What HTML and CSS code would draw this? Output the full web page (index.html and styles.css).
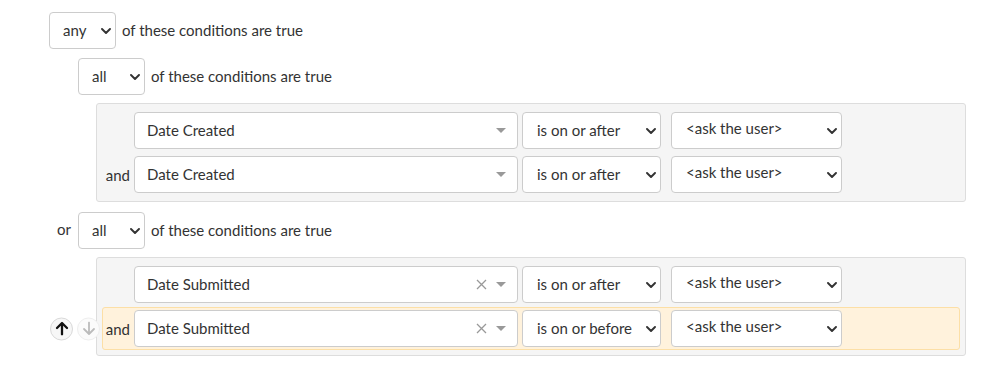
FILE: index.html
```html
<!DOCTYPE html>
<html lang="en">
<head>
  <meta charset="UTF-8">
  <title>Conditions</title>
  <link rel="stylesheet" href="styles.css">
</head>
<body>
  <div class="builder">
    <div class="group-head">
      <div class="pick pick-match"><span>any</span>
        <svg class="chev" width="10" height="6" viewBox="0 0 10 6"><path d="M1 1 L5 5 L9 1"/></svg>
      </div>
      <span class="head-text">of these conditions are true</span>
    </div>

    <div class="child">
      <div class="connector"></div>
      <div class="child-body">
        <div class="group-head">
          <div class="pick pick-match"><span>all</span>
            <svg class="chev" width="10" height="6" viewBox="0 0 10 6"><path d="M1 1 L5 5 L9 1"/></svg>
          </div>
          <span class="head-text">of these conditions are true</span>
        </div>
        <div class="panel">
          <div class="cond">
            <span class="cond-label"></span>
            <div class="pick pick-field"><span>Date Created</span>
              <span class="field-icons">
                <svg class="caret" width="10" height="5" viewBox="0 0 10 5"><path d="M0 0 H10 L5 5 Z"/></svg>
              </span>
            </div>
            <div class="pick pick-op"><span>is on or after</span>
              <svg class="chev" width="10" height="6" viewBox="0 0 10 6"><path d="M1 1 L5 5 L9 1"/></svg>
            </div>
            <div class="pick pick-value"><span>&lt;ask the user&gt;</span>
              <svg class="chev" width="10" height="6" viewBox="0 0 10 6"><path d="M1 1 L5 5 L9 1"/></svg>
            </div>
          </div>
          <div class="cond">
            <span class="cond-label">and</span>
            <div class="pick pick-field"><span>Date Created</span>
              <span class="field-icons">
                <svg class="caret" width="10" height="5" viewBox="0 0 10 5"><path d="M0 0 H10 L5 5 Z"/></svg>
              </span>
            </div>
            <div class="pick pick-op"><span>is on or after</span>
              <svg class="chev" width="10" height="6" viewBox="0 0 10 6"><path d="M1 1 L5 5 L9 1"/></svg>
            </div>
            <div class="pick pick-value"><span>&lt;ask the user&gt;</span>
              <svg class="chev" width="10" height="6" viewBox="0 0 10 6"><path d="M1 1 L5 5 L9 1"/></svg>
            </div>
          </div>
        </div>
      </div>
    </div>

    <div class="child">
      <div class="connector">or</div>
      <div class="child-body">
        <div class="group-head">
          <div class="pick pick-match"><span>all</span>
            <svg class="chev" width="10" height="6" viewBox="0 0 10 6"><path d="M1 1 L5 5 L9 1"/></svg>
          </div>
          <span class="head-text">of these conditions are true</span>
        </div>
        <div class="panel">
          <div class="cond">
            <span class="cond-label"></span>
            <div class="pick pick-field"><span>Date Submitted</span>
              <span class="field-icons">
                <svg class="clear" width="11" height="11" viewBox="0 0 11 11"><path d="M1 1 L10 10 M10 1 L1 10"/></svg>
                <svg class="caret" width="10" height="5" viewBox="0 0 10 5"><path d="M0 0 H10 L5 5 Z"/></svg>
              </span>
            </div>
            <div class="pick pick-op"><span>is on or after</span>
              <svg class="chev" width="10" height="6" viewBox="0 0 10 6"><path d="M1 1 L5 5 L9 1"/></svg>
            </div>
            <div class="pick pick-value"><span>&lt;ask the user&gt;</span>
              <svg class="chev" width="10" height="6" viewBox="0 0 10 6"><path d="M1 1 L5 5 L9 1"/></svg>
            </div>
          </div>
          <div class="cond cond-active">
            <div class="move">
              <span class="move-btn"><svg width="14" height="14" viewBox="0 0 14 14"><path d="M7 13 V2 M2 6.5 L7 1.5 L12 6.5"/></svg></span>
              <span class="move-btn move-off"><svg width="14" height="14" viewBox="0 0 14 14"><path d="M7 1 V12 M2 7.5 L7 12.5 L12 7.5"/></svg></span>
            </div>
            <span class="cond-label">and</span>
            <div class="pick pick-field"><span>Date Submitted</span>
              <span class="field-icons">
                <svg class="clear" width="11" height="11" viewBox="0 0 11 11"><path d="M1 1 L10 10 M10 1 L1 10"/></svg>
                <svg class="caret" width="10" height="5" viewBox="0 0 10 5"><path d="M0 0 H10 L5 5 Z"/></svg>
              </span>
            </div>
            <div class="pick pick-op"><span>is on or before</span>
              <svg class="chev" width="10" height="6" viewBox="0 0 10 6"><path d="M1 1 L5 5 L9 1"/></svg>
            </div>
            <div class="pick pick-value"><span>&lt;ask the user&gt;</span>
              <svg class="chev" width="10" height="6" viewBox="0 0 10 6"><path d="M1 1 L5 5 L9 1"/></svg>
            </div>
          </div>
        </div>
      </div>
    </div>
  </div>
</body>
</html>
```

FILE: styles.css
```css
body {
  margin: 0;
  padding: 12px 0 0 49px;
  font-family: Lato, 'Open Sans', sans-serif;
  font-size: 15px;
  color: #333333;
  background-color: #FFFFFF;
}
.builder {
  width: 917px;
}
.group-head {
  display: flex;
  align-items: center;
  gap: 6px;
  height: 37px;
}
.head-text {
  position: relative;
  top: -1px;
}
.child {
  display: flex;
  margin-top: 9px;
}
.child + .child {
  margin-top: 10px;
}
.connector {
  width: 29px;
  flex-shrink: 0;
  box-sizing: border-box;
  padding-right: 7px;
  text-align: right;
  line-height: 35px;
}
.child-body {
  flex: 1;
}
.pick {
  display: flex;
  align-items: center;
  justify-content: space-between;
  box-sizing: border-box;
  height: 37px;
  border: 1px solid #CCCCCC;
  border-radius: 4px;
  background-color: #FFFFFF;
  padding: 0 4px 0 13px;
  white-space: nowrap;
}
.pick span {
  position: relative;
  top: -1px;
}
.chev {
  flex-shrink: 0;
  fill: none;
  stroke: #333333;
  stroke-width: 1.9;
  stroke-linecap: round;
  stroke-linejoin: round;
}
.pick-match {
  width: 67px;
}
.panel {
  margin: 8px 0 0 18px;
  padding: 5px;
  background-color: #F5F5F5;
  border: 1px solid #DDDDDD;
  border-radius: 3px;
  display: flex;
  flex-direction: column;
  gap: 1px;
}
.cond {
  position: relative;
  display: flex;
  align-items: center;
  padding: 2px;
  border: 1px solid transparent;
  border-radius: 3px;
}
.cond-active {
  background-color: #FFF2DC;
  border-color: #FCDFA6;
}
.cond-label {
  width: 25px;
  margin-right: 4px;
  text-align: right;
}
.pick-field {
  width: 384px;
  padding: 0 11px 0 12px;
}
.pick .field-icons {
  display: flex;
  align-items: center;
  gap: 9px;
  top: 0;
}
.caret {
  fill: #999999;
}
.clear {
  fill: none;
  stroke: #999999;
  stroke-width: 1.3;
}
.pick-op {
  width: 139px;
  margin-left: 4px;
  padding-left: 14px;
}
.pick-value {
  width: 171px;
  margin-left: 10px;
  padding-left: 14px;
}
.pick-value span {
  top: -3px;
}
.move {
  position: absolute;
  left: -53px;
  top: 50%;
  transform: translateY(-50%);
  display: flex;
  gap: 4px;
}
.move-btn {
  display: flex;
  align-items: center;
  justify-content: center;
  box-sizing: border-box;
  width: 23px;
  height: 23px;
  border: 1px solid #D9D9D9;
  border-radius: 50%;
  background-color: #F7F7F7;
}
.move-btn svg {
  fill: none;
  stroke: #111111;
  stroke-width: 2.3;
  stroke-linecap: round;
  stroke-linejoin: round;
}
.move-off {
  border-color: #EEEEEE;
  background-color: #FBFBFB;
}
.move-off svg {
  stroke: #BBBBBB;
  stroke-width: 1.8;
}
```
